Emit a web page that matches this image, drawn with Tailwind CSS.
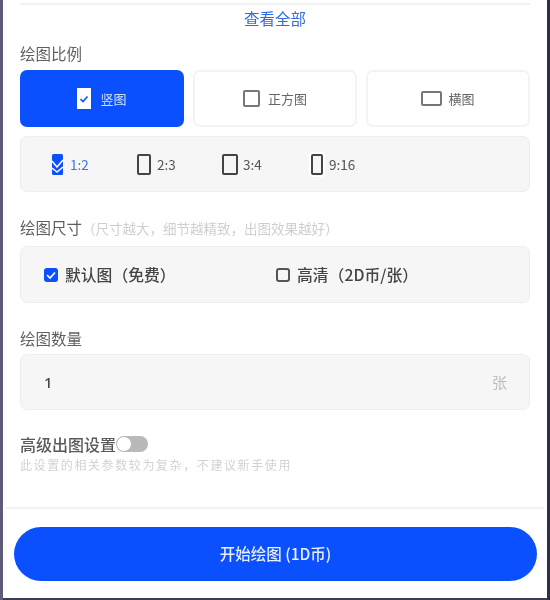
<!DOCTYPE html>
<html lang="zh-CN">
<head>
  <meta charset="UTF-8">
  <title>绘图设置</title>
  <script src="https://cdn.jsdelivr.net/npm/@tailwindcss/browser@4"></script>
</head>
<body class="bg-white">
  <div class="flex h-[600px] w-[550px] overflow-hidden bg-[#3c3c52] font-['Noto_Sans_CJK_SC','Noto_Sans',sans-serif]">
    <div class="w-[3px] shrink-0 bg-[#5c5c78]"></div>
    <main class="flex h-[598px] flex-1 flex-col bg-white blur-[0.4px]">
      <div class="px-[17px] pt-[3px]">
        <div class="h-[2px] bg-[#f1f1f1]"></div>
        <a class="block h-[26px] text-center text-[15.5px] leading-[26px] text-[#2f6bea]">查看全部</a>

        <h2 class="mt-[9px] h-[26px] text-[15.5px] leading-[26px] text-[#5f5f5f]">绘图比例</h2>
        <div class="mt-[4px] grid grid-cols-3 gap-[9px]">
          <button class="flex h-[57px] items-center justify-center gap-[9px] rounded-[7px] bg-[#0a50ff] text-[13px] text-white/80">
            <svg class="h-[21px] w-[14px]" viewBox="0 0 14 21"><rect width="14" height="21" fill="#fff"/><path d="M3.5 11l2.500 2.500 4.500-5" fill="none" stroke="#0a50ff" stroke-width="1.600"/></svg>
            竖图
          </button>
          <button class="flex h-[57px] items-center justify-center gap-[8px] rounded-[7px] border-2 border-[#f3f3f3] bg-white text-[13px] text-[#666]">
            <span class="size-[17px] rounded-[2px] border-2 border-[#777]"></span>
            正方图
          </button>
          <button class="flex h-[57px] items-center justify-center gap-[6px] rounded-[7px] border-2 border-[#f3f3f3] bg-white text-[13px] text-[#666]">
            <span class="h-[15px] w-[21px] rounded-[2px] border-2 border-[#777]"></span>
            横图
          </button>
        </div>

        <div class="mt-[9px] flex h-[56px] items-center rounded-[7px] border border-[#eeeeee] bg-[#f6f6f6] pl-[31px] text-[13.500px] text-[#555]">
          <div class="flex w-[85px] items-center gap-[7px] text-[#3f74e6]">
            <svg class="h-[21px] w-[11px]" viewBox="0 0 11 21"><rect width="11" height="21" rx="1.500" fill="#0a50ff"/><path d="M0 7l5 6 6-7M0 14l5 4 6-5" fill="none" stroke="#f6f6f6" stroke-width="1.600"/></svg>
            1:2
          </div>
          <div class="flex w-[85px] items-center gap-[6px]">
            <span class="h-[21px] w-[14px] rounded-[2px] border-2 border-[#444]"></span>
            2:3
          </div>
          <div class="flex w-[89px] items-center gap-[5px]">
            <span class="h-[21px] w-[16px] rounded-[2px] border-2 border-[#444]"></span>
            3:4
          </div>
          <div class="flex items-center gap-[6px]">
            <span class="h-[21px] w-[12px] rounded-[2px] border-2 border-[#444] ring-2 ring-white"></span>
            9:16
          </div>
        </div>

        <h2 class="mt-[23px] flex h-[26px] items-center text-[15.5px] text-[#5f5f5f]">
          绘图尺寸<span class="whitespace-nowrap text-[13.5px] text-[#cfcfcf]">&#xFF08;尺寸越大&#xFF0C;细节越精致&#xFF0C;出图效果越好&#xFF09;</span>
        </h2>
        <div class="mt-[5px] flex h-[57px] items-center rounded-[7px] border border-[#eeeeee] bg-[#f6f6f6] pl-[23px] text-[15.8px] font-medium text-[#444]">
          <label class="flex w-[232px] items-center gap-[7px]">
            <svg class="size-[14px]" viewBox="0 0 14 14"><rect width="14" height="14" rx="3" fill="#0a50ff"/><path d="M3 7l3 3 5-5.500" fill="none" stroke="#fff" stroke-width="1.700"/></svg>
            默认图&#xFF08;免费&#xFF09;
          </label>
          <label class="flex items-center gap-[7px]">
            <span class="size-[14px] rounded-[3px] border-2 border-[#555]"></span>
            高清&#xFF08;2D币/张&#xFF09;
          </label>
        </div>

        <h2 class="mt-[22px] h-[26px] text-[15.5px] leading-[26px] text-[#5f5f5f]">绘图数量</h2>
        <div class="mt-[3px] flex h-[56px] items-center justify-between rounded-[7px] border border-[#eeeeee] bg-[#f6f6f6] pl-[23px] pr-[22px] text-[15px]">
          <span class="font-['Noto_Sans'] font-medium text-[#444]">1</span>
          <span class="text-[#bdbdbd]">张</span>
        </div>

        <div class="mt-[23px] flex h-[22px] items-center text-[16px] font-medium text-[#5a5a5a]">
          高级出图设置
          <span class="mb-[1px] flex h-[16px] w-[32px] items-center rounded-full bg-[#b9b9b9]">
            <span class="ml-[1px] size-[14px] rounded-full bg-white"></span>
          </span>
        </div>
        <p class="h-[20px] text-[12px] leading-[20px] tracking-[1.6px] text-[#d2d2d2]">此设置的相关参数较为复杂&#xFF0C;不建议新手使用</p>
      </div>

      <div class="mx-[3px] mt-[32px] h-[2px] bg-[#f1f1f1]"></div>
      <div class="pl-[11px] pr-[10px] pt-[18px]">
        <button class="h-[54px] w-full rounded-full bg-[#0a50ff] text-[15.5px] font-medium text-white/90">开始绘图 (1D币)</button>
      </div>
    </main>
    <div class="w-[3px] shrink-0 bg-[#2e2e48]"></div>
  </div>
</body>
</html>
